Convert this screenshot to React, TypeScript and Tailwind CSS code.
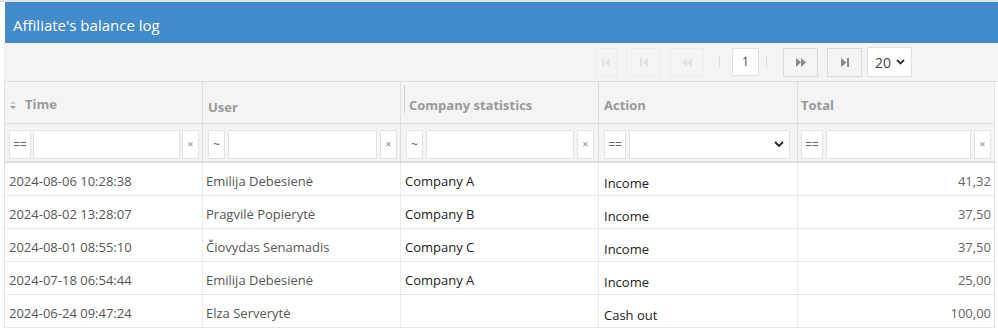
import React from 'react'

const font = { fontFamily: '"Open Sans", "Liberation Sans", sans-serif' }

const rows = [
  { time: '2024-08-06 10:28:38', user: 'Emilija Debesienė', company: 'Company A', action: 'Income', total: '41,32' },
  { time: '2024-08-02 13:28:07', user: 'Pragvilė Popierytė', company: 'Company B', action: 'Income', total: '37,50' },
  { time: '2024-08-01 08:55:10', user: 'Čiovydas Senamadis', company: 'Company C', action: 'Income', total: '37,50' },
  { time: '2024-07-18 06:54:44', user: 'Emilija Debesienė', company: 'Company A', action: 'Income', total: '25,00' },
  { time: '2024-06-24 09:47:24', user: 'Elza Serverytė', company: '', action: 'Cash out', total: '100,00' },
]

const FirstIcon = ({ c }: { c: string }) => (
  <svg width="10" height="11" viewBox="0 0 10 11">
    <rect x="1" y="1" width="2" height="9" fill={c} />
    <path d="M9 1 L3.5 5.5 L9 10 Z" fill={c} />
  </svg>
)

const RewIcon = ({ c }: { c: string }) => (
  <svg width="12" height="11" viewBox="0 0 12 11">
    <path d="M6 1 L1 5.5 L6 10 Z M11 1 L6 5.5 L11 10 Z" fill={c} />
  </svg>
)

const FwdIcon = ({ c }: { c: string }) => (
  <svg width="12" height="11" viewBox="0 0 12 11">
    <path d="M1 1 L6 5.5 L1 10 Z M6 1 L11 5.5 L6 10 Z" fill={c} />
  </svg>
)

const LastIcon = ({ c }: { c: string }) => (
  <svg width="10" height="11" viewBox="0 0 10 11">
    <path d="M1 1 L6.5 5.5 L1 10 Z" fill={c} />
    <rect x="7" y="1" width="2" height="9" fill={c} />
  </svg>
)

const Box = ({ text, w }: { text: string; w: string }) => (
  <div className={`${w} h-[29px] shrink-0 border border-[#e3e3e3] bg-white flex items-center justify-center text-[12px] text-[#666]`}>
    {text}
  </div>
)

const Input = () => <div className="flex-1 h-[29px] border border-[#e3e3e3] bg-white" />

const Clear = () => (
  <div className="w-[17px] h-[29px] shrink-0 border border-[#e3e3e3] bg-white flex items-center justify-center text-[11px] text-[#888]">
    ×
  </div>
)

const cols = 'grid grid-cols-[198px_198px_198px_199px_197px]'

export default function App() {
  return (
    <div className="w-[998px] h-[336px] bg-white border-t-2 border-[#dfe3e8] overflow-hidden" style={font}>
      <div className="ml-[4px]">
        <div className="ml-[1px] h-[41px] bg-[#428bca] flex items-center pl-[8px] pt-[5px] text-white text-[15px]">
          Affiliate's balance log
        </div>
        <div className="h-[39px] bg-[#f4f4f4] border-b border-[#dedede] border-l border-l-[#ececec] flex items-start justify-end pr-[86px] pt-[4px]">
          <div className="flex items-center">
            <div className="w-[22px] h-[29px] border border-[#ededed] flex items-center justify-center">
              <FirstIcon c="#e2e2e2" />
            </div>
            <div className="ml-[9px] w-[35px] h-[29px] border border-[#ededed] flex items-center justify-center">
              <FirstIcon c="#e2e2e2" />
            </div>
            <div className="ml-[9px] w-[34px] h-[29px] border border-[#ededed] flex items-center justify-center">
              <RewIcon c="#e2e2e2" />
            </div>
            <div className="ml-[15px] w-px h-[12px] bg-[#dcdcdc]" />
            <div className="ml-[12px] w-[27px] h-[28px] border border-[#e0e0e0] bg-white flex items-center justify-center text-[13px] text-[#555]">
              1
            </div>
            <div className="ml-[7px] w-px h-[12px] bg-[#dcdcdc]" />
            <div className="ml-[16px] w-[35px] h-[29px] border border-[#dadada] flex items-center justify-center">
              <FwdIcon c="#8a8a8a" />
            </div>
            <div className="ml-[9px] w-[35px] h-[29px] border border-[#dadada] flex items-center justify-center">
              <LastIcon c="#8a8a8a" />
            </div>
            <div className="ml-[5px] w-[45px] h-[30px] border border-[#e0e0e0] bg-white flex items-center pl-[7px] gap-[5px] text-[14px] text-[#444]">
              20
              <svg width="9" height="6" viewBox="0 0 9 6">
                <path d="M1 1 L4.5 4.5 L8 1" stroke="#333" strokeWidth="1.8" fill="none" />
              </svg>
            </div>
          </div>
        </div>

        <div className="w-[991px] border-l border-r border-[#e2e2e2]">
          <div className={`${cols} h-[42px] bg-[#f4f4f4] border-b border-[#dedede] text-[13px] font-bold text-[#999]`}>
            <div className="border-r border-[#dedede] flex items-center pl-[4px] pt-[4px]">
              <svg width="8" height="10" viewBox="0 0 8 10" className="mr-[8px]">
                <path d="M1 4 L4 1 L7 4 Z" fill="#ccc" />
                <path d="M1 6 L4 9 L7 6 Z" fill="#999" />
              </svg>
              Time
            </div>
            <div className="border-r border-[#dedede] flex items-center pl-[5px] pt-[11px]">User</div>
            <div className="border-r border-[#dedede] flex items-start pl-[3px]">
              <div className="mt-[3px] h-[28px] w-px bg-[#cfcfcf]" />
              <div className="ml-[4px] mt-[14px]">Company statistics</div>
            </div>
            <div className="border-r border-[#dedede] flex items-center pl-[5px] pt-[6px]">Action</div>
            <div className="flex items-center pl-[3px] pt-[6px]">Total</div>
          </div>

          <div className={`${cols} h-[39px] bg-[#f4f4f4] border-b-2 border-[#dcdcdc]`}>
            <div className="border-r border-[#dedede] flex gap-[2px] pl-[4px] pr-[3px] pt-[6px]">
              <Box text="==" w="w-[22px]" />
              <Input />
              <Clear />
            </div>
            <div className="border-r border-[#dedede] flex gap-[3px] pl-[5px] pr-[3px] pt-[6px]">
              <Box text="~" w="w-[17px]" />
              <Input />
              <Clear />
            </div>
            <div className="border-r border-[#dedede] flex gap-[3px] pl-[5px] pr-[4px] pt-[6px]">
              <Box text="~" w="w-[17px]" />
              <Input />
              <Clear />
            </div>
            <div className="border-r border-[#dedede] flex gap-[3px] pl-[5px] pr-[7px] pt-[6px]">
              <Box text="==" w="w-[22px]" />
              <div className="flex-1 h-[29px] border border-[#e3e3e3] bg-white flex items-center justify-end pr-[5px]">
                <svg width="10" height="7" viewBox="0 0 10 7">
                  <path d="M1 1 L5 5 L9 1" stroke="#222" strokeWidth="1.8" fill="none" />
                </svg>
              </div>
            </div>
            <div className="flex gap-[3px] pl-[3px] pr-[4px] pt-[6px]">
              <Box text="==" w="w-[22px]" />
              <Input />
              <Clear />
            </div>
          </div>

          {rows.map((r, i) => (
            <div key={i} className={`${cols} h-[33px] border-b border-[#e8e8e8] text-[13px]`}>
              <div className="border-r border-[#ebebeb] flex items-center pl-[4px] pt-[6px] text-[#555]">{r.time}</div>
              <div className="border-r border-[#ebebeb] flex items-center pl-[3px] pt-[6px] text-[#555]">{r.user}</div>
              <div className="border-r border-[#ebebeb] flex items-center pl-[4px] pt-[6px] text-[#222]">{r.company}</div>
              <div className="border-r border-[#ebebeb] flex items-center pl-[5px] pt-[10px] text-[#222]">{r.action}</div>
              <div className="flex items-center justify-end pr-[4px] pt-[6px] text-[#666]">{r.total}</div>
            </div>
          ))}
        </div>
      </div>
    </div>
  )
}
